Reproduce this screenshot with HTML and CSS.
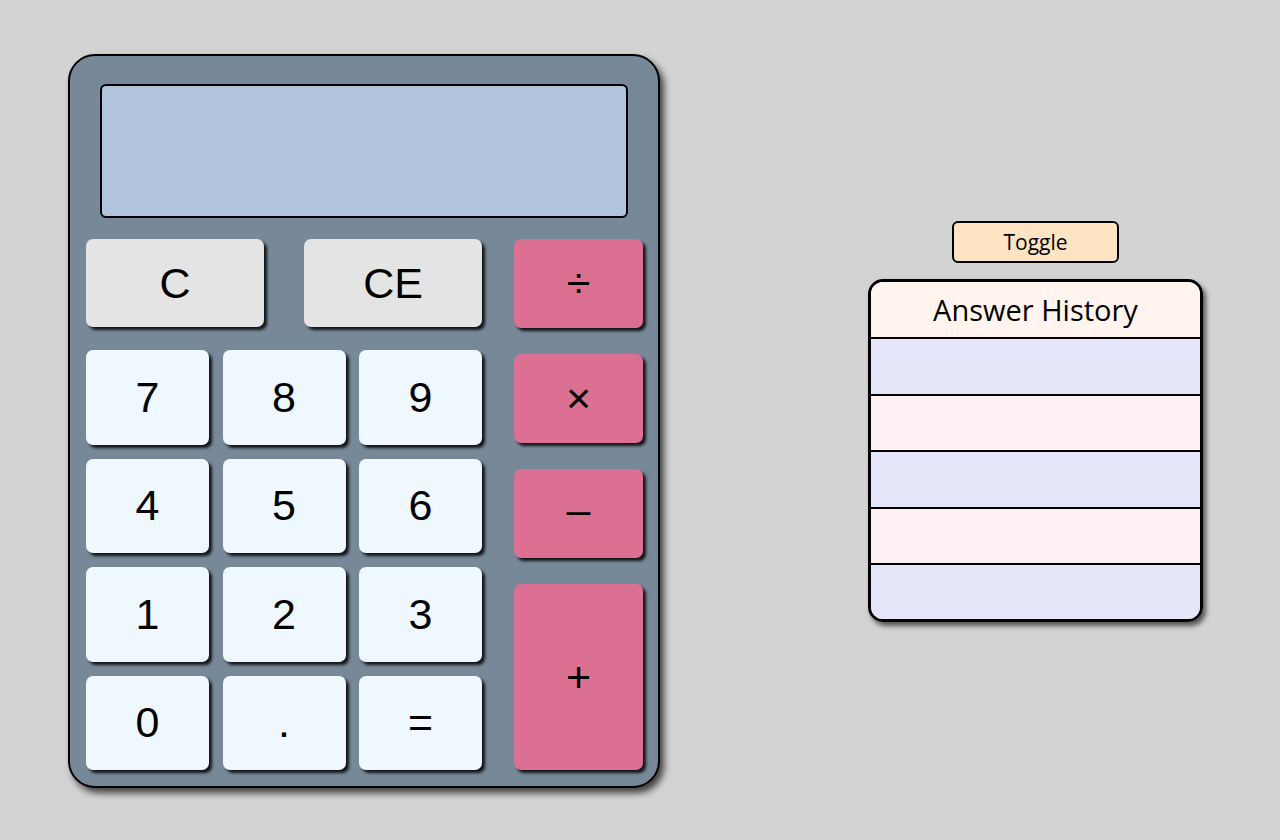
FILE: index.html
```html
<!DOCTYPE html>
<html lang="en">
<head>
<meta charset="utf-8">
<title>Calculator</title>
<link rel="stylesheet" href="styles.css">
</head>
<body>
  <main class="page">
    <section class="calculator">
      <div class="display"></div>
      <div class="keypad">
        <div class="main-keys">
          <div class="clear-row">
            <button class="key key-clear">C</button>
            <button class="key key-clear">CE</button>
          </div>
          <div class="digits">
            <button class="key key-digit">7</button>
            <button class="key key-digit">8</button>
            <button class="key key-digit">9</button>
            <button class="key key-digit">4</button>
            <button class="key key-digit">5</button>
            <button class="key key-digit">6</button>
            <button class="key key-digit">1</button>
            <button class="key key-digit">2</button>
            <button class="key key-digit">3</button>
            <button class="key key-digit">0</button>
            <button class="key key-digit">.</button>
            <button class="key key-digit">=</button>
          </div>
        </div>
        <div class="operators">
          <button class="key key-op">÷</button>
          <button class="key key-op">×</button>
          <button class="key key-op key-minus">–</button>
          <button class="key key-op key-plus">+</button>
        </div>
      </div>
    </section>
    <aside class="history-wrap">
      <button class="toggle">Toggle</button>
      <div class="history">
        <div class="history-title">Answer History</div>
        <div class="history-row row-a"></div>
        <div class="history-row row-b"></div>
        <div class="history-row row-a"></div>
        <div class="history-row row-b"></div>
        <div class="history-row row-a last"></div>
      </div>
    </aside>
  </main>
</body>
</html>
```

FILE: styles.css
```css
html, body {
  margin: 0;
  padding: 0;
  background: #d3d3d3;
  height: 100%;
}

.page {
  display: flex;
  align-items: flex-start;
  padding: 54px 0 0 68px;
}

.calculator {
  width: 588px;
  height: 730px;
  background: #778899;
  border: 2px solid #000;
  border-radius: 27px;
  box-shadow: 4px 5px 7px rgba(0, 0, 0, 0.7);
  display: flex;
  flex-direction: column;
}

.display {
  margin: 28px 30px 0 30px;
  height: 130px;
  background: #b0c4de;
  border: 2px solid #000;
  border-radius: 6px;
}

.keypad {
  margin: 21px 15px 0 16px;
  display: flex;
  gap: 32px;
}

.main-keys {
  width: 396px;
  display: flex;
  flex-direction: column;
  gap: 23px;
}

.clear-row {
  display: flex;
  gap: 40px;
}

.digits {
  display: grid;
  grid-template-columns: repeat(3, 123px);
  grid-auto-rows: 94.5px;
  column-gap: 13.5px;
  row-gap: 14px;
}

.operators {
  width: 129px;
  display: flex;
  flex-direction: column;
  gap: 26px;
}

.key {
  border: none;
  margin: 0;
  padding: 0;
  border-radius: 7px;
  font-family: "Liberation Sans", Arial, sans-serif;
  font-size: 43px;
  color: #000;
  box-shadow: 3px 3px 3px rgba(0, 0, 0, 0.85);
  display: flex;
  align-items: center;
  justify-content: center;
}

.key-clear {
  width: 178px;
  height: 88px;
  background: #e4e4e4;
}

.key-digit {
  background: #f0f8ff;
}

.key-op {
  height: 89px;
  background: #db7093;
}

.key-minus {
  padding-bottom: 9px;
}

.key-plus {
  height: 186px;
}

.history-wrap {
  margin: 167px 0 0 208px;
  width: 335px;
  display: flex;
  flex-direction: column;
  align-items: center;
  gap: 16px;
}

.toggle {
  width: 167px;
  height: 42px;
  margin: 0;
  padding: 0;
  background: #ffe4c4;
  border: 2px solid #000;
  border-radius: 6px;
  font-family: "Open Sans", "Noto Sans", sans-serif;
  font-size: 21px;
  color: #000;
}

.history {
  width: 329px;
  border: 3px solid #000;
  border-radius: 15px;
  overflow: hidden;
  box-shadow: 3px 4px 5px rgba(0, 0, 0, 0.6);
  display: flex;
  flex-direction: column;
}

.history-title {
  height: 55px;
  background: #fff5ee;
  border-bottom: 2px solid #000;
  font-family: "Open Sans", "Noto Sans", sans-serif;
  font-size: 29px;
  color: #000;
  display: flex;
  align-items: center;
  justify-content: center;
}

.history-row {
  height: 54.5px;
  border-bottom: 2px solid #000;
}

.history-row.last {
  border-bottom: none;
  height: 54px;
}

.row-a {
  background: #e6e6fa;
}

.row-b {
  background: #fff0f5;
}
```
